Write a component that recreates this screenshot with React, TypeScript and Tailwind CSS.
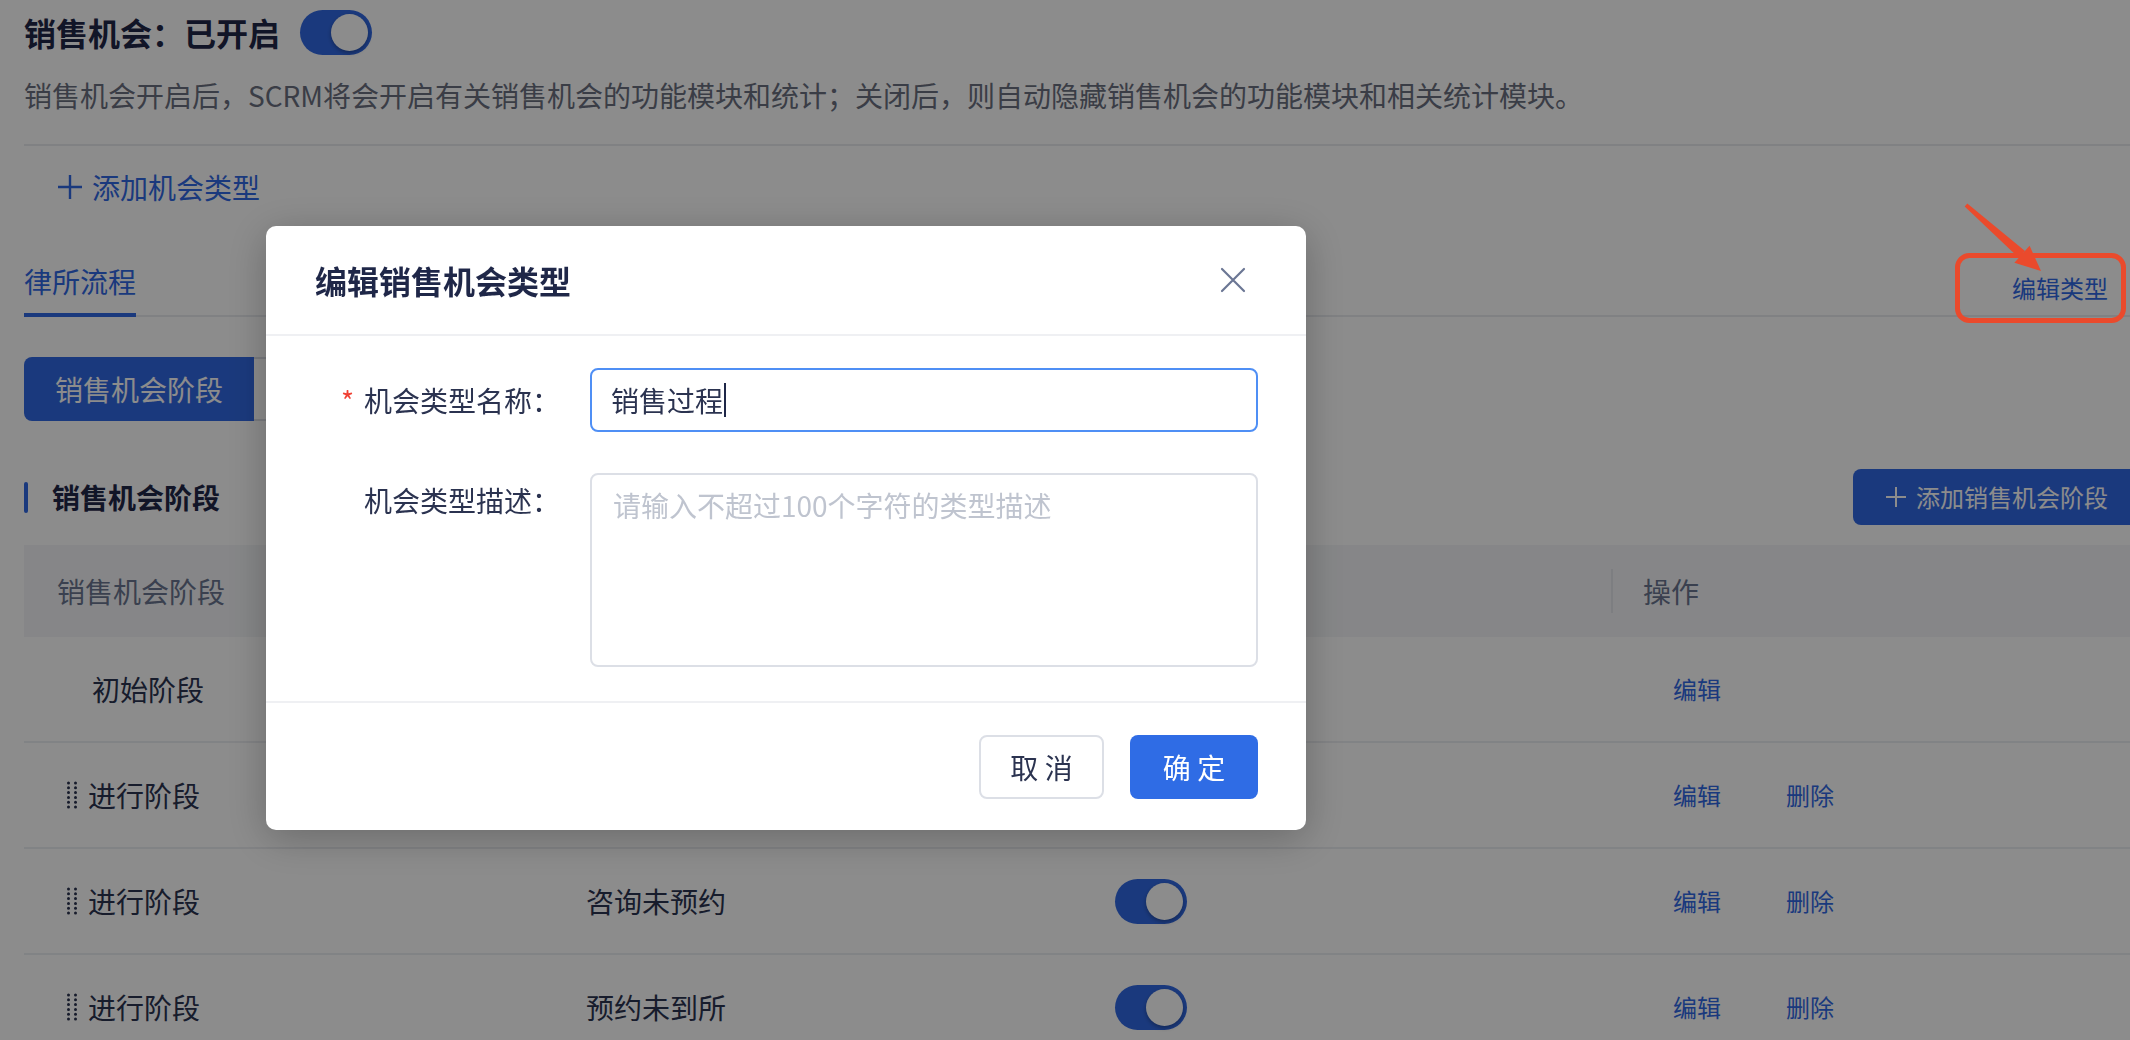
import React from "react";

// Thin plus sign drawn edge to edge (lucide's plus has too much padding here)
function PlusMark({ size }: { size: number }) {
  return (
    <svg width={size} height={size} viewBox="0 0 24 24" fill="none" stroke="currentColor" strokeWidth="2.4" className="shrink-0">
      <path d="M12 0v24M0 12h24" />
    </svg>
  );
}

// Small on/off switch used in the header and in the stage table
function Toggle() {
  return (
    <span className="inline-flex h-[45px] w-[72px] shrink-0 items-center justify-end rounded-full bg-[#3169e4] px-[4px]">
      <span className="h-[37px] w-[37px] rounded-full bg-white shadow-[0_2px_4px_rgba(0,0,0,0.3)]" />
    </span>
  );
}

// Six rows of two dots, the drag grip in front of a stage name
function DragHandle() {
  const rows = [0, 1, 2, 3, 4, 5];
  return (
    <svg width="13" height="28" viewBox="0 0 13 28" className="shrink-0">
      {rows.map((r) => (
        <g key={r} fill="#2b3350">
          <circle cx="2.5" cy={2 + r * 4.8} r="1.5" />
          <circle cx="9.5" cy={2 + r * 4.8} r="1.5" />
        </g>
      ))}
    </svg>
  );
}

// Cells hidden behind the dialog are left empty
const stages = [
  { handle: false, name: "初始阶段", stage: "", toggle: false, remove: false },
  { handle: true, name: "进行阶段", stage: "", toggle: true, remove: true },
  { handle: true, name: "进行阶段", stage: "咨询未预约", toggle: true, remove: true },
  { handle: true, name: "进行阶段", stage: "预约未到所", toggle: true, remove: true },
];

export default function App() {
  return (
    <div className="relative h-[1040px] w-full overflow-hidden bg-white font-['Noto_Sans_CJK_SC','Noto_Sans',sans-serif] text-[#2b3350]">
      {/* Page under the dialog */}
      <div className="ml-[24px] w-[2116px]">
        {/* Header */}
        <div className="mt-[10px] flex h-[45px] items-center gap-[20px]">
          <h1 className="text-[32px] font-semibold leading-[45px] text-[#1f2748]">销售机会：已开启</h1>
          <Toggle />
        </div>
        <p className="mt-[20px] text-[28px] leading-[40px] text-[#6b7080]">
          销售机会开启后，SCRM将会开启有关销售机会的功能模块和统计；关闭后，则自动隐藏销售机会的功能模块和相关统计模块。
        </p>
        <div className="mt-[29px] h-[2px] bg-[#e9ebef]" />

        {/* Add type */}
        <div className="ml-[34px] mt-[21px] flex h-[40px] items-center gap-[10px] text-[28px] leading-[40px] text-[#3169e4]">
          <PlusMark size={24} />
          <span>添加机会类型</span>
        </div>

        {/* Tabs */}
        <div className="mt-[54px] flex items-end border-b-2 border-[#e9ebef]">
          <div className="-mb-[2px] border-b-4 border-[#3169e4] pb-[12px] text-[28px] leading-[40px] text-[#3169e4]">
            律所流程
          </div>
          <span className="ml-auto self-center pr-[32px] text-[24px] leading-[34px] text-[#3169e4]">编辑类型</span>
        </div>

        {/* Segmented buttons */}
        <div className="mt-[40px] flex h-[64px]">
          <button className="h-full w-[230px] rounded-l-[8px] bg-[#3169e4] text-[28px] text-white">销售机会阶段</button>
          <button className="h-full w-[230px] rounded-r-[8px] border-2 border-l-0 border-[#dcdfe6] bg-white" />
        </div>

        {/* Section title */}
        <div className="mt-[48px] flex h-[56px] items-center justify-between">
          <div className="flex items-center gap-[24px]">
            <span className="h-[31px] w-[4px] rounded-full bg-[#3169e4]" />
            <span className="text-[28px] font-semibold leading-[40px] text-[#1f2748]">销售机会阶段</span>
          </div>
          <button className="flex h-full w-[287px] items-center gap-[10px] rounded-[8px] bg-[#3169e4] pl-[33px] text-[24px] text-white">
            <PlusMark size={20} />
            添加销售机会阶段
          </button>
        </div>

        {/* Stage table */}
        <div className="mt-[20px]">
          <div className="grid h-[92px] grid-cols-4 bg-[#f4f5f7] text-[28px] text-[#6b7590]">
            <div className="flex items-center pl-[33px]">销售机会阶段</div>
            <div className="flex items-center">
              <span className="h-[44px] w-[2px] bg-[#e4e6eb]" />
            </div>
            <div className="flex items-center">
              <span className="h-[44px] w-[2px] bg-[#e4e6eb]" />
            </div>
            <div className="flex items-center">
              <span className="h-[44px] w-[2px] bg-[#e4e6eb]" />
              <span className="ml-[30px]">操作</span>
            </div>
          </div>
          {stages.map((s, i) => (
            <div key={i} className="grid h-[106px] grid-cols-4 border-b-2 border-[#eceef2] text-[28px]">
              <div className={`flex items-center gap-[9px] ${s.handle ? "pl-[42px]" : "pl-[68px]"}`}>
                {s.handle && <DragHandle />}
                <span>{s.name}</span>
              </div>
              <div className="flex items-center pl-[33px]">{s.stage}</div>
              <div className="flex items-center pl-[33px]">{s.toggle && <Toggle />}</div>
              <div className="flex items-center gap-[65px] pl-[62px] text-[24px] text-[#3169e4]">
                <span>编辑</span>
                {s.remove && <span>删除</span>}
              </div>
            </div>
          ))}
        </div>
      </div>

      {/* Dim mask */}
      <div className="fixed inset-0 bg-[rgba(0,0,0,0.45)]" />

      {/* Edit dialog */}
      <div className="fixed left-[266px] top-[226px] w-[1040px] rounded-[10px] bg-white shadow-[0_8px_40px_rgba(0,0,0,0.25)]">
        <div className="flex h-[110px] items-center justify-between border-b-2 border-[#eff0f3] pl-[49px] pr-[60px]">
          <h2 className="text-[32px] font-semibold leading-[44px] text-[#1f2748]">编辑销售机会类型</h2>
          <svg width="26" height="26" viewBox="0 0 26 26" fill="none" stroke="#6b7694" strokeWidth="2.2" strokeLinecap="round">
            <path d="M2 2 24 24M24 2 2 24" />
          </svg>
        </div>

        <div className="px-[48px] pb-[34px] pt-[32px]">
          <div className="flex items-center">
            <div className="flex h-[64px] w-[276px] items-center justify-end gap-[10px] pr-[30px] text-[28px] leading-[40px]">
              <span className="text-[#f04134]">*</span>
              <span>机会类型名称：</span>
            </div>
            <div className="flex h-[64px] w-[668px] items-center rounded-[8px] border-2 border-[#4f8ff5] pl-[19px] text-[28px]">
              <span>销售过程</span>
              <span className="ml-[1px] h-[34px] w-[2px] bg-[#1f2748]" />
            </div>
          </div>
          <div className="mt-[41px] flex items-start">
            <div className="mt-[7px] w-[276px] pr-[30px] text-right text-[28px] leading-[40px]">机会类型描述：</div>
            <div className="h-[194px] w-[668px] rounded-[8px] border-2 border-[#dcdfe6] pl-[21px] pt-[10px] text-[28px] leading-[40px] text-[#bfc4cf]">
              请输入不超过100个字符的类型描述
            </div>
          </div>
        </div>

        <div className="flex h-[129px] items-center justify-end gap-[26px] border-t-2 border-[#eff0f3] pr-[48px]">
          <button className="h-[64px] w-[125px] rounded-[8px] border-2 border-[#dcdfe6] bg-white text-[28px] text-[#2b3350]">
            取 消
          </button>
          <button className="h-[64px] w-[128px] rounded-[8px] bg-[#2f6ce5] text-[28px] text-white">确 定</button>
        </div>
      </div>

      {/* Red annotation: arrow and box around 编辑类型 */}
      <svg className="absolute left-[1940px] top-[190px]" width="190" height="140" viewBox="0 0 190 140">
        <polygon points="27.3,13.5 24.7,16.5 79,68 85,61" fill="#ea4a2c" />
        <polygon points="101,81 74.4,72.7 89.6,55.7" fill="#ea4a2c" />
        <rect x="17.5" y="65.5" width="166" height="65" rx="12" fill="none" stroke="#ea4a2c" strokeWidth="5" />
      </svg>
    </div>
  );
}
